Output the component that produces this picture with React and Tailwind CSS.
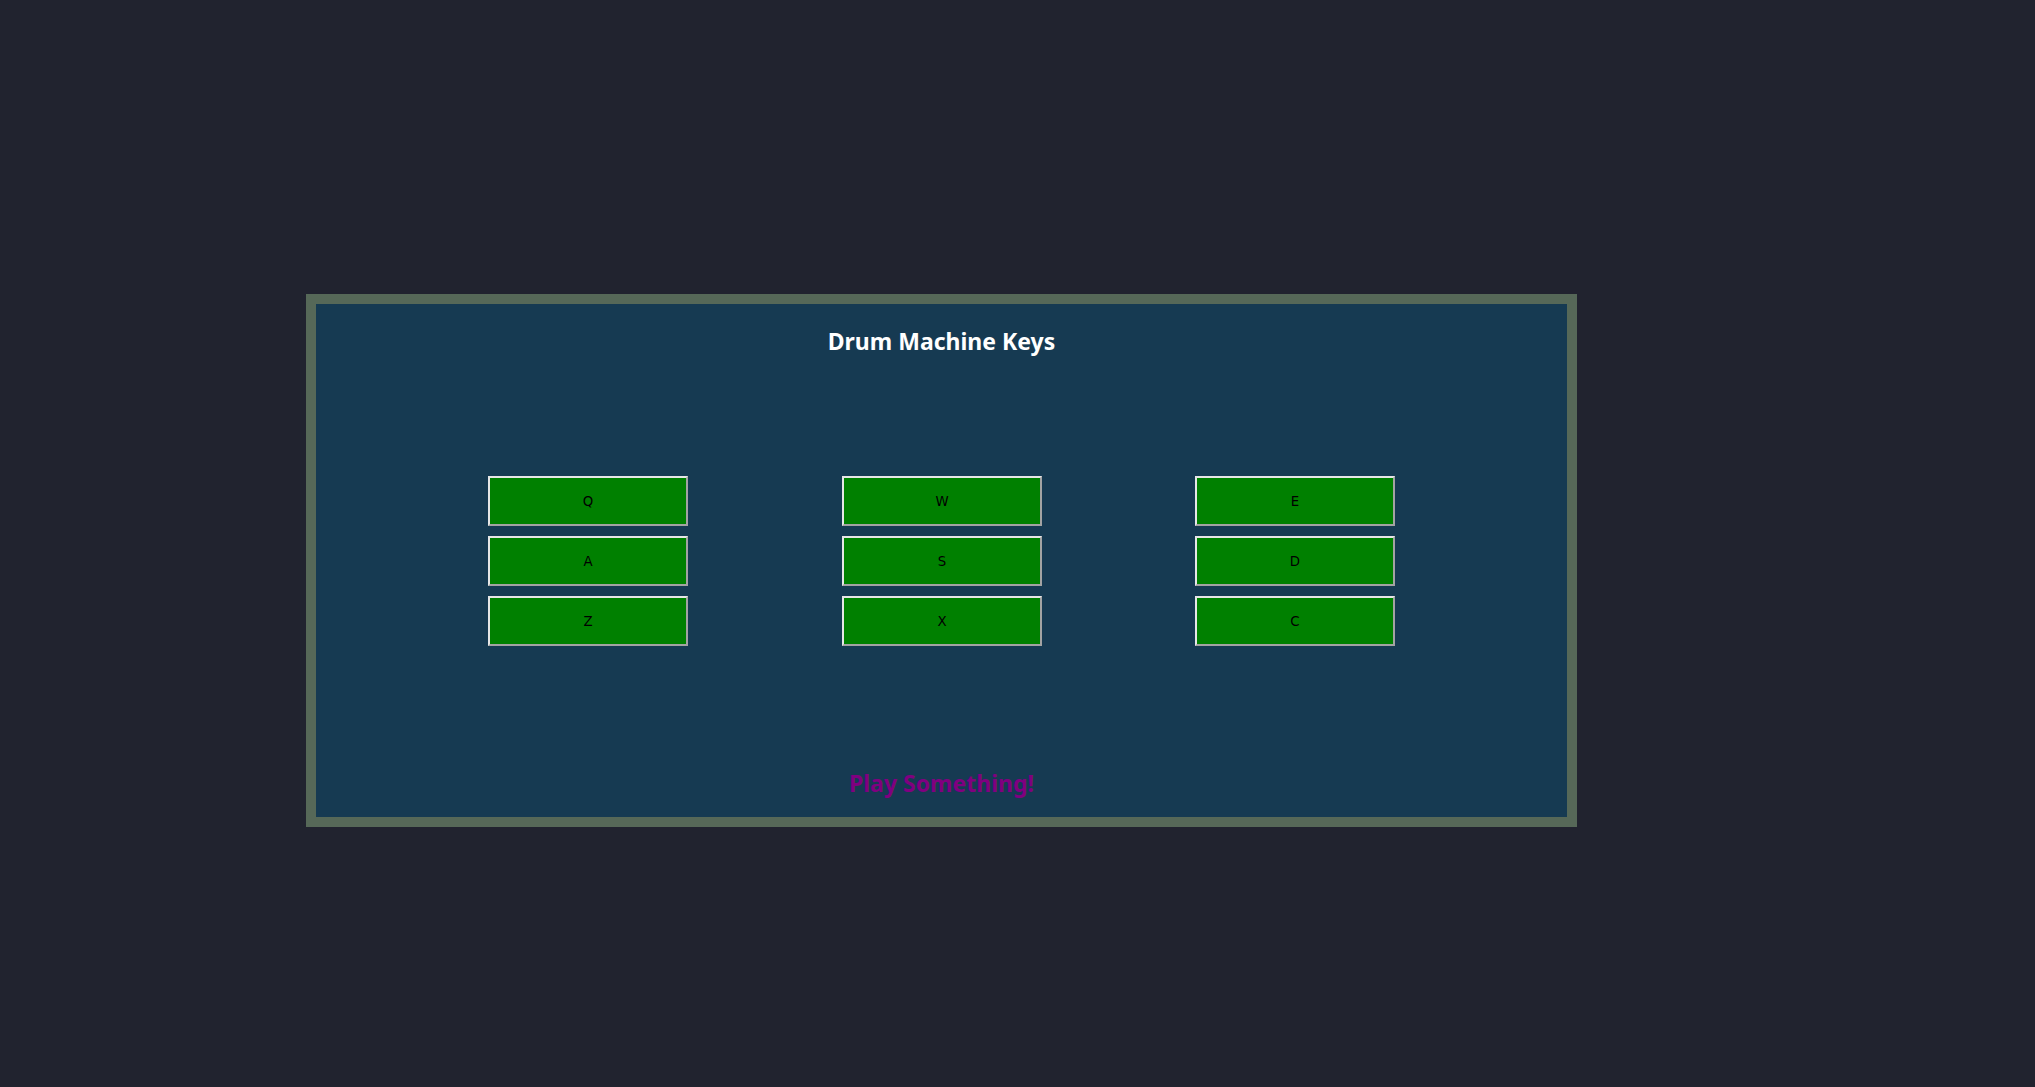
import React from "react";

const rows = [
  ["Q", "W", "E"],
  ["A", "S", "D"],
  ["Z", "X", "C"],
];

export default function App() {
  return (
    <div className="min-h-[1087px] w-full bg-[#21232f] pt-[294px] pl-[306px]">
      <div className="w-[1271px] h-[533px] border-[10px] border-[#566858] bg-[#163a52] flex flex-col items-center">
        <h1
          className="mt-[21px] text-[23px] leading-[32px] font-bold text-white"
          style={{ fontFamily: '"Noto Sans", sans-serif' }}
        >
          Drum Machine Keys
        </h1>
        <div className="mt-[119px] w-[907px] grid grid-cols-[354px_353px_200px] gap-y-[10px]">
          {rows.flat().map((k) => (
            <div key={k} className="flex">
              <button
                className="w-[200px] h-[50px] pt-[2px] bg-[#008000] border-2 border-t-[#e6e6e6] border-l-[#e6e6e6] border-r-[#a3a3a3] border-b-[#a3a3a3] text-black text-[13.333px]"
                style={{ fontFamily: '"DejaVu Sans", sans-serif' }}
              >
                {k}
              </button>
            </div>
          ))}
        </div>
        <p
          className="mt-[121px] text-[23px] leading-[32px] font-bold text-[#800080]"
          style={{ fontFamily: '"Noto Sans", sans-serif' }}
        >
          Play Something!
        </p>
      </div>
    </div>
  );
}
